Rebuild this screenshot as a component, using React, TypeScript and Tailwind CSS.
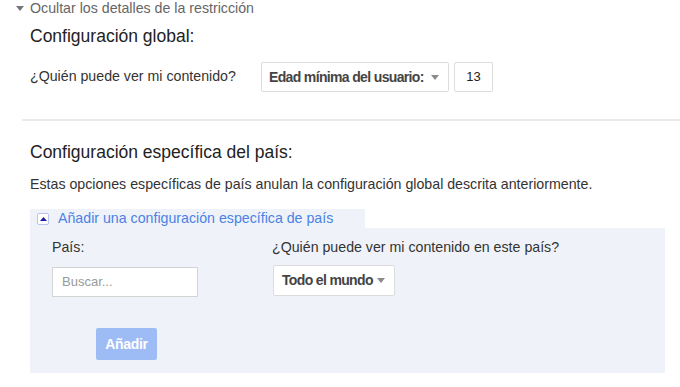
const Caret = () => (
  <svg width="8" height="5" viewBox="0 0 8 5" className="shrink-0">
    <path d="M0 0 L8 0 L4 5 Z" fill="#8a8a8a" />
  </svg>
);

const App = () => {
  return (
    <div className="w-[680px] h-[387px] overflow-hidden bg-white font-['Liberation_Sans',Arial,sans-serif] text-[#222] whitespace-nowrap">
      <div className="flex items-center h-[17px] pl-[16px] gap-[6px] text-[14.2px] text-[#666]">
        <svg width="8" height="5" viewBox="0 0 8 5">
          <path d="M0 0 L8 0 L4 5 Z" fill="#777" />
        </svg>
        <span>Ocultar los detalles de la restricción</span>
      </div>

      <div className="pl-[30px] pt-[8px]">
        <h2 className="text-[17.5px] leading-[22px] text-[#222]">Configuración global:</h2>
        <div className="flex items-center mt-[15px] h-[30px]">
          <span className="text-[14.2px] text-[#333] w-[231px]">¿Quién puede ver mi contenido?</span>
          <div className="flex items-center justify-between w-[188px] h-[30px] border border-[#dcdcdc] rounded-[2px] pl-[7px] pr-[9px]">
            <span className="text-[14px] tracking-[-0.65px] font-bold text-[#444]">Edad mínima del usuario:</span>
            <Caret />
          </div>
          <div className="ml-[5px] flex items-center justify-center w-[39px] h-[30px] border border-[#dcdcdc] rounded-[2px] text-[13px] text-[#222]">
            13
          </div>
        </div>
      </div>

      <div className="ml-[22px] mt-[27px] h-[2px] bg-[#ebebeb]" />

      <div className="pl-[30px] pt-[20px]">
        <h2 className="text-[17.5px] leading-[22px] text-[#222]">Configuración específica del país:</h2>
        <p className="mt-[13px] text-[14.2px] leading-[17px] text-[#333]">
          Estas opciones específicas de país anulan la configuración global descrita anteriormente.
        </p>

        <div className="mt-[16px] w-[635px]">
          <div className="flex items-center gap-[9px] w-[335px] h-[19px] bg-[#eff3f9] pl-[7px]">
            <span className="flex items-center justify-center w-[12px] h-[12px] border border-[#b9c3f0] rounded-[2px] bg-white">
              <svg width="7" height="4" viewBox="0 0 7 4">
                <path d="M0 4 L7 4 L3.5 0 Z" fill="#1c1ca8" />
              </svg>
            </span>
            <span className="text-[14.2px] text-[#4a82e6]">Añadir una configuración específica de país</span>
          </div>
          <div className="bg-[#eff3f9] h-[145px] pl-[22px] pt-[11px]">
            <div className="flex">
              <div className="w-[220px]">
                <div className="text-[14.2px] leading-[17px] text-[#333]">País:</div>
                <div className="mt-[11px] w-[146px] h-[30px] bg-white border border-[#d4d4d4] flex items-center pl-[9px] text-[13px] text-[#999]">
                  Buscar...
                </div>
              </div>
              <div>
                <div className="text-[14.2px] leading-[17px] text-[#333]">¿Quién puede ver mi contenido en este país?</div>
                <div className="mt-[9px] ml-[1px] flex items-center justify-between w-[122px] h-[31px] bg-white border border-[#dcdcdc] rounded-[2px] pl-[8px] pr-[9px]">
                  <span className="text-[14px] tracking-[-0.65px] font-bold text-[#444]">Todo el mundo</span>
                  <Caret />
                </div>
              </div>
            </div>
            <button className="mt-[31px] ml-[44px] w-[61px] h-[32px] rounded-[2px] bg-[#9dbcf5] text-white text-[14px] tracking-[-0.3px] font-bold">
              Añadir
            </button>
          </div>
        </div>
      </div>
    </div>
  );
};

export default App;
